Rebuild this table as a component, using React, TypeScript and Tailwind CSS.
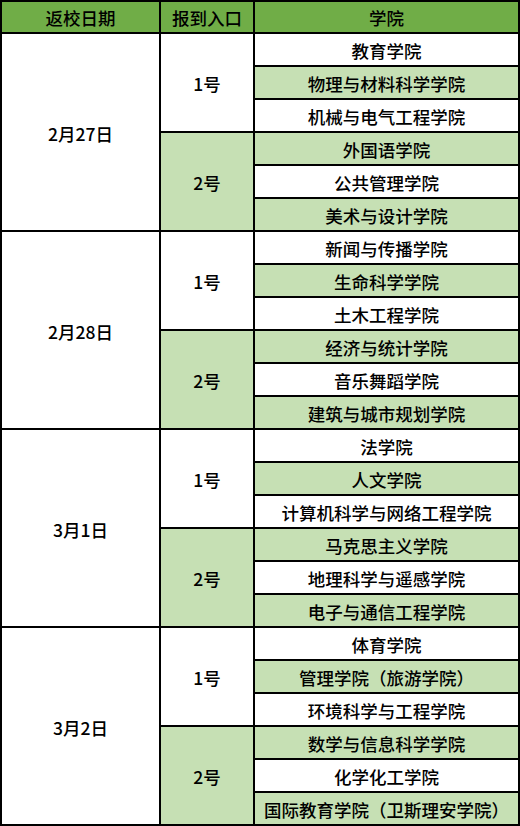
const data = [
  {
    date: "2月27日",
    groups: [
      ["教育学院", "物理与材料科学学院", "机械与电气工程学院"],
      ["外国语学院", "公共管理学院", "美术与设计学院"],
    ],
  },
  {
    date: "2月28日",
    groups: [
      ["新闻与传播学院", "生命科学学院", "土木工程学院"],
      ["经济与统计学院", "音乐舞蹈学院", "建筑与城市规划学院"],
    ],
  },
  {
    date: "3月1日",
    groups: [
      ["法学院", "人文学院", "计算机科学与网络工程学院"],
      ["马克思主义学院", "地理科学与遥感学院", "电子与通信工程学院"],
    ],
  },
  {
    date: "3月2日",
    groups: [
      ["体育学院", "管理学院（旅游学院）", "环境科学与工程学院"],
      ["数学与信息科学学院", "化学化工学院", "国际教育学院（卫斯理安学院）"],
    ],
  },
];

const App = () => {
  let row = 2;
  let stripe = 0;

  return (
    <div
      className="w-[520px] h-[826px] bg-white"
      style={{ fontFamily: '"Noto Sans CJK SC", "Noto Sans", sans-serif' }}
    >
      <div className="grid grid-cols-[157px_92px_1fr] grid-rows-[30px_repeat(24,31px)] gap-[2px] p-[2px] bg-black text-[17.5px] font-medium text-black leading-none">
        {/* Header */}
        <div className="bg-[#70ad47] flex items-center justify-center pt-[2px]">返校日期</div>
        <div className="bg-[#70ad47] flex items-center justify-center pt-[2px]">报到入口</div>
        <div className="bg-[#70ad47] flex items-center justify-center pt-[2px]">学院</div>

        {data.map((d) => {
          const start = row;
          row += 6;
          return [
            <div
              key={d.date}
              className="bg-white flex items-center justify-center col-start-1 pt-[4px]"
              style={{ gridRow: `${start} / span 6` }}
            >
              {d.date}
            </div>,
            ...d.groups.map((g, gi) => {
              const gStart = start + gi * 3;
              return [
                <div
                  key={`${d.date}-${gi}`}
                  className={`${gi === 0 ? "bg-white" : "bg-[#c6e0b4]"} flex items-center justify-center col-start-2 pt-[2px]`}
                  style={{ gridRow: `${gStart} / span 3` }}
                >
                  {gi + 1}号
                </div>,
                ...g.map((name, ni) => {
                  const green = stripe++ % 2 === 1;
                  return (
                    <div
                      key={name}
                      className={`${green ? "bg-[#c6e0b4]" : "bg-white"} flex items-center justify-center col-start-3 whitespace-nowrap pt-[2px]`}
                      style={{ gridRow: `${gStart + ni}` }}
                    >
                      {name}
                    </div>
                  );
                }),
              ];
            }),
          ];
        })}
      </div>
    </div>
  );
};

export default App;
